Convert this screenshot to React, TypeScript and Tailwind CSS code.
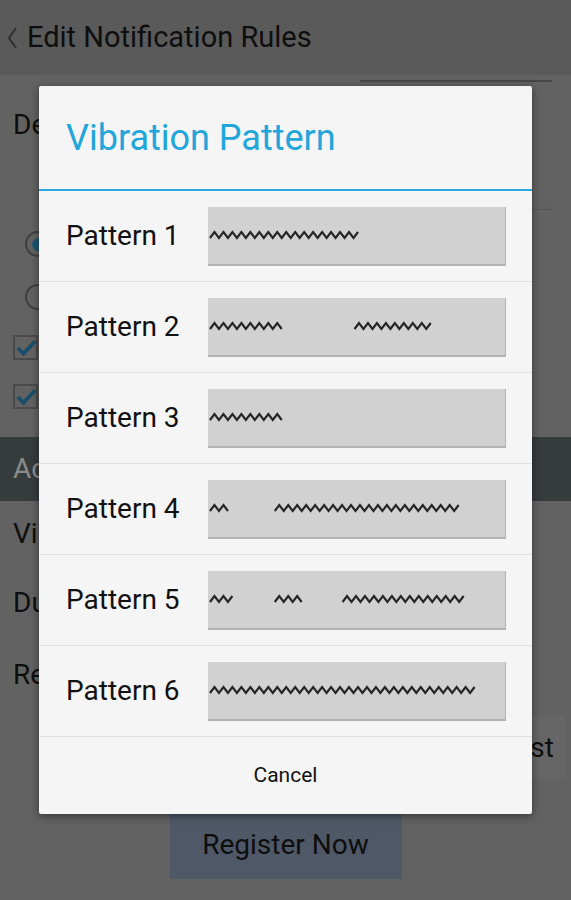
import React from "react";

const patterns: number[][][] = [
  [[2, 154]],
  [[2, 78], [147, 226]],
  [[2, 78]],
  [[2, 24], [67, 255]],
  [[2, 25], [67, 94], [135, 258]],
  [[2, 268]],
];

const zigzag = (from: number, to: number) => {
  const pts: string[] = [];
  let up = false;
  for (let x = from; x <= to; x += 4.5) {
    pts.push(`${x},${up ? 3 : 9}`);
    up = !up;
  }
  return pts.join(" ");
};

const Wave: React.FC<{ segs: number[][] }> = ({ segs }) => (
  <svg width="298" height="12" viewBox="0 0 298 12" fill="none">
    {segs.map(([a, b], i) => (
      <polyline
        key={i}
        points={zigzag(a, b)}
        stroke="#262626"
        strokeWidth={2.2}
        strokeLinejoin="miter"
      />
    ))}
  </svg>
);

const Check: React.FC = () => (
  <div className="w-[25px] h-[25px] border-2 border-[#4a4a4a] flex items-center justify-center">
    <svg width="22" height="18" viewBox="0 0 22 18" fill="none">
      <path d="M3 9l6 6L21 2" stroke="#1a4f6b" strokeWidth={4} />
    </svg>
  </div>
);

export default function App() {
  return (
    <div className="relative w-full h-[900px] overflow-hidden bg-[#626262] font-['Roboto',sans-serif] text-[#0e0e0e]">
      {/* header */}
      <div className="h-[75px] bg-[#5a5a5a] flex items-center pl-[6px] gap-[9px]">
        <svg width="12" height="24" viewBox="0 0 12 24" fill="none">
          <path d="M10 2L3 12l7 10" stroke="#2e2e2e" strokeWidth={2} />
        </svg>
        <span className="text-[29px]">Edit Notification Rules</span>
      </div>

      {/* form behind the dialog */}
      <div className="flex flex-col h-[142px]">
        <div className="self-end mr-[19px] w-[192px] h-[7px] border-b-2 border-[#474747]" />
        <div className="flex flex-1">
          <div className="pl-[13px] pt-[22px] text-[28px]">De</div>
          <div className="ml-auto mr-[19px] mb-[7px] self-end w-[260px] h-[4px] border-b border-r border-l border-[#565656]" />
        </div>
      </div>

      <div className="flex flex-col">
        <div className="h-[54px] flex items-center pl-[25px]">
          <div className="w-[26px] h-[26px] rounded-full border-2 border-[#3f3f3f] flex items-center justify-center">
            <div className="w-[13px] h-[13px] rounded-full bg-[#1d5672]" />
          </div>
        </div>
        <div className="h-[52px] flex items-center pl-[25px]">
          <div className="w-[26px] h-[26px] rounded-full border-2 border-[#3f3f3f]" />
        </div>
        <div className="h-[49px] flex items-center pl-[13px]">
          <Check />
        </div>
        <div className="h-[49px] flex items-center pl-[13px]">
          <Check />
        </div>
      </div>

      <div className="mt-[16px] h-[64px] bg-[#363b3b] flex items-center pl-[13px] text-[28px] text-[#8b8b8b]">
        Ac
      </div>

      <div className="flex flex-col text-[28px]">
        <div className="h-[66px] flex items-center pl-[13px]">Vi</div>
        <div className="h-[72px] flex items-center pl-[13px]">Du</div>
        <div className="h-[72px] flex items-center pl-[13px]">Re</div>
      </div>

      <div className="mt-[5px] flex justify-end mr-[6px]">
        <div className="w-[76px] h-[63px] bg-[#666666] rounded-sm flex items-center justify-center text-[28px]">
          Test
        </div>
      </div>

      <div className="mt-[35px] mx-auto w-[232px] h-[65px] bg-[#4f5867] flex items-center justify-center text-[28px] pb-[4px]">
        Register Now
      </div>

      {/* dialog */}
      <div className="absolute left-[39px] top-[86px] w-[493px] bg-[#f5f5f5] rounded-[2px] shadow-[0_2px_8px_rgba(0,0,0,0.45)]">
        <div className="h-[103px] flex items-center pl-[27px] text-[36px] text-[#22a6da]">
          Vibration Pattern
        </div>
        <div className="h-[2px] bg-[#2aa9dc]" />
        {patterns.map((segs, i) => (
          <div key={i} className="h-[91px] border-b border-[#e2e2e2] flex items-center">
            <span className="pl-[27px] w-[169px] text-[28px] text-[#111]">Pattern {i + 1}</span>
            <div className="w-[298px] h-[59px] bg-[#d1d1d1] border-b-2 border-r border-[#b3b3b3] flex items-center">
              <Wave segs={segs} />
            </div>
          </div>
        ))}
        <div className="h-[77px] flex items-center justify-center text-[21px] text-[#111]">
          Cancel
        </div>
      </div>
    </div>
  );
}
